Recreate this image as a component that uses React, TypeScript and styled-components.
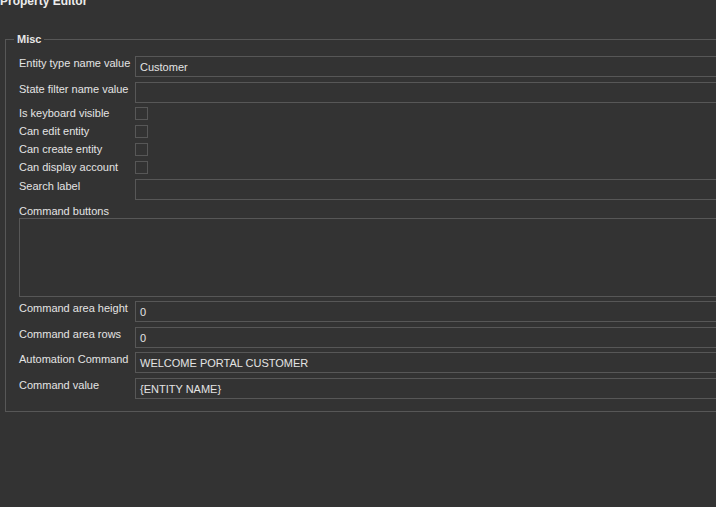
import React from "react";
import styled, { createGlobalStyle } from "styled-components";

const GlobalStyle = createGlobalStyle`
  html, body {
    margin: 0;
    padding: 0;
    background: #333333;
    overflow: hidden;
  }
  body {
    font-family: "Liberation Sans", Arial, sans-serif;
    font-size: 11px;
    color: #e4e4e4;
  }
`;

type Field =
  | { kind: "text"; label: string; value?: string }
  | { kind: "check"; label: string }
  | { kind: "area"; label: string };

const fields: Field[] = [
  { kind: "text", label: "Entity type name value", value: "Customer" },
  { kind: "text", label: "State filter name value" },
  { kind: "check", label: "Is keyboard visible" },
  { kind: "check", label: "Can edit entity" },
  { kind: "check", label: "Can create entity" },
  { kind: "check", label: "Can display account" },
  { kind: "text", label: "Search label" },
  { kind: "area", label: "Command buttons" },
  { kind: "text", label: "Command area height", value: "0" },
  { kind: "text", label: "Command area rows", value: "0" },
  { kind: "text", label: "Automation Command", value: "WELCOME PORTAL CUSTOMER" },
  { kind: "text", label: "Command value", value: "{ENTITY NAME}" },
];

const App = () => (
  <Page>
    <GlobalStyle />
    <Title>Property Editor</Title>
    <Group>
      <Legend>Misc</Legend>
      <Rows>
        {fields.map((f) => {
          if (f.kind === "check") {
            return (
              <CheckRow key={f.label}>
                <Label>{f.label}</Label>
                <CheckBox />
              </CheckRow>
            );
          }
          if (f.kind === "area") {
            return (
              <AreaBlock key={f.label}>
                <AreaLabel>{f.label}</AreaLabel>
                <TextArea />
              </AreaBlock>
            );
          }
          return (
            <Row key={f.label}>
              <Label $top>{f.label}</Label>
              <TextBox>{f.value}</TextBox>
            </Row>
          );
        })}
      </Rows>
    </Group>
  </Page>
);

const Page = styled.div`
  width: 900px;
  height: 507px;
`;

// the panel title is scrolled up a little, so its top is cut off
const Title = styled.div`
  font-size: 12px;
  font-weight: bold;
  line-height: 14px;
  color: #ececec;
  margin-top: -6px;
`;

const Group = styled.fieldset`
  margin: 25px 0 0 5px;
  padding: 10px 0 12px 13px;
  border: 1px solid #575757;
  min-width: 0;
  width: 880px;
  box-sizing: border-box;
`;

const Legend = styled.legend`
  font-weight: bold;
  font-size: 11px;
  line-height: 13px;
  padding: 0 3px;
  margin-left: -5px;
  color: #e6e6e6;
`;

const Rows = styled.div`
  display: flex;
  flex-direction: column;
  gap: 4.5px;
`;

const Row = styled.div`
  display: flex;
  align-items: flex-start;
  height: 21px;
`;

const CheckRow = styled.div`
  display: flex;
  align-items: center;
  height: 13.5px;
`;

const Label = styled.div<{ $top?: boolean }>`
  width: 116px;
  flex: none;
  line-height: 13px;
  padding-top: ${(p) => (p.$top ? "1px" : "0")};
  white-space: nowrap;
`;

const TextBox = styled.div`
  flex: 1;
  height: 21px;
  box-sizing: border-box;
  border: 1px solid #575757;
  padding: 0 4px;
  line-height: 20px;
  white-space: nowrap;
`;

const CheckBox = styled.div`
  width: 13px;
  height: 13px;
  box-sizing: border-box;
  border: 1px solid #575757;
  align-self: flex-start;
`;

const AreaBlock = styled.div`
  display: flex;
  flex-direction: column;
`;

const AreaLabel = styled.div`
  line-height: 13px;
  height: 13px;
`;

const TextArea = styled.div`
  height: 79px;
  box-sizing: border-box;
  border: 1px solid #575757;
`;

export default App;
